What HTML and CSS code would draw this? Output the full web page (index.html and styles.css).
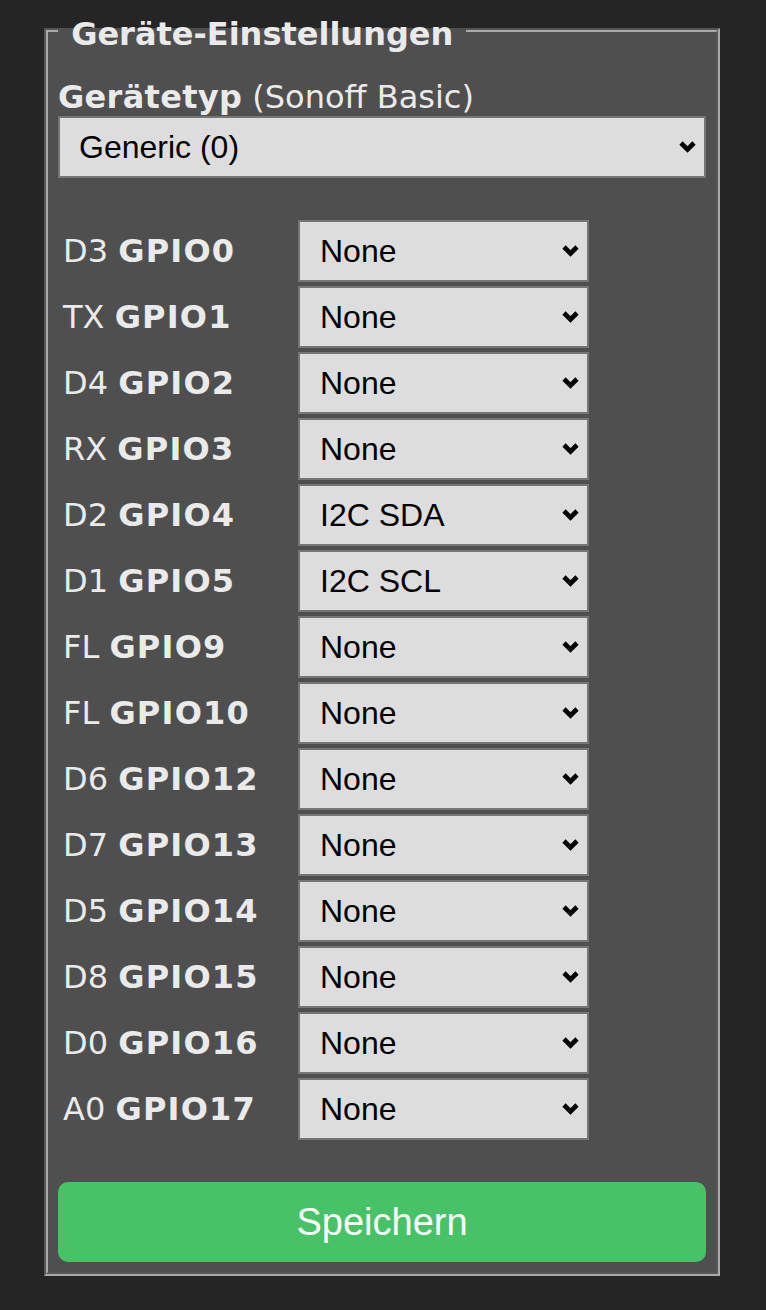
FILE: index.html
```html
<!DOCTYPE html>
<html lang="de">
<head>
<meta charset="utf-8">
<title>Geräte-Einstellungen</title>
<link rel="stylesheet" href="styles.css">
</head>
<body>
<fieldset class="panel">
  <legend class="panel-title">&nbsp;Geräte-Einstellungen&nbsp;</legend>
  <div class="type-label"><b>Gerätetyp</b> (Sonoff Basic)</div>
  <div class="sel sel-wide">
    <select><option>Generic (0)</option></select>
    <svg class="chev" viewBox="0 0 19 13" width="19" height="13"><path d="M3 3 L9.5 9.5 L16 3" fill="none" stroke="#000" stroke-width="4.6"/></svg>
  </div>
  <div class="gpio-grid">
    <div class="gpio-label">D3 <b>GPIO0</b></div>
    <div class="sel"><select><option>None</option></select><svg class="chev" viewBox="0 0 19 13" width="19" height="13"><path d="M3 3 L9.5 9.5 L16 3" fill="none" stroke="#000" stroke-width="4.6"/></svg></div>
    <div class="gpio-label">TX <b>GPIO1</b></div>
    <div class="sel"><select><option>None</option></select><svg class="chev" viewBox="0 0 19 13" width="19" height="13"><path d="M3 3 L9.5 9.5 L16 3" fill="none" stroke="#000" stroke-width="4.6"/></svg></div>
    <div class="gpio-label">D4 <b>GPIO2</b></div>
    <div class="sel"><select><option>None</option></select><svg class="chev" viewBox="0 0 19 13" width="19" height="13"><path d="M3 3 L9.5 9.5 L16 3" fill="none" stroke="#000" stroke-width="4.6"/></svg></div>
    <div class="gpio-label">RX <b>GPIO3</b></div>
    <div class="sel"><select><option>None</option></select><svg class="chev" viewBox="0 0 19 13" width="19" height="13"><path d="M3 3 L9.5 9.5 L16 3" fill="none" stroke="#000" stroke-width="4.6"/></svg></div>
    <div class="gpio-label">D2 <b>GPIO4</b></div>
    <div class="sel"><select><option>I2C SDA</option></select><svg class="chev" viewBox="0 0 19 13" width="19" height="13"><path d="M3 3 L9.5 9.5 L16 3" fill="none" stroke="#000" stroke-width="4.6"/></svg></div>
    <div class="gpio-label">D1 <b>GPIO5</b></div>
    <div class="sel"><select><option>I2C SCL</option></select><svg class="chev" viewBox="0 0 19 13" width="19" height="13"><path d="M3 3 L9.5 9.5 L16 3" fill="none" stroke="#000" stroke-width="4.6"/></svg></div>
    <div class="gpio-label">FL <b>GPIO9</b></div>
    <div class="sel"><select><option>None</option></select><svg class="chev" viewBox="0 0 19 13" width="19" height="13"><path d="M3 3 L9.5 9.5 L16 3" fill="none" stroke="#000" stroke-width="4.6"/></svg></div>
    <div class="gpio-label">FL <b>GPIO10</b></div>
    <div class="sel"><select><option>None</option></select><svg class="chev" viewBox="0 0 19 13" width="19" height="13"><path d="M3 3 L9.5 9.5 L16 3" fill="none" stroke="#000" stroke-width="4.6"/></svg></div>
    <div class="gpio-label">D6 <b>GPIO12</b></div>
    <div class="sel"><select><option>None</option></select><svg class="chev" viewBox="0 0 19 13" width="19" height="13"><path d="M3 3 L9.5 9.5 L16 3" fill="none" stroke="#000" stroke-width="4.6"/></svg></div>
    <div class="gpio-label">D7 <b>GPIO13</b></div>
    <div class="sel"><select><option>None</option></select><svg class="chev" viewBox="0 0 19 13" width="19" height="13"><path d="M3 3 L9.5 9.5 L16 3" fill="none" stroke="#000" stroke-width="4.6"/></svg></div>
    <div class="gpio-label">D5 <b>GPIO14</b></div>
    <div class="sel"><select><option>None</option></select><svg class="chev" viewBox="0 0 19 13" width="19" height="13"><path d="M3 3 L9.5 9.5 L16 3" fill="none" stroke="#000" stroke-width="4.6"/></svg></div>
    <div class="gpio-label">D8 <b>GPIO15</b></div>
    <div class="sel"><select><option>None</option></select><svg class="chev" viewBox="0 0 19 13" width="19" height="13"><path d="M3 3 L9.5 9.5 L16 3" fill="none" stroke="#000" stroke-width="4.6"/></svg></div>
    <div class="gpio-label">D0 <b>GPIO16</b></div>
    <div class="sel"><select><option>None</option></select><svg class="chev" viewBox="0 0 19 13" width="19" height="13"><path d="M3 3 L9.5 9.5 L16 3" fill="none" stroke="#000" stroke-width="4.6"/></svg></div>
    <div class="gpio-label">A0 <b>GPIO17</b></div>
    <div class="sel"><select><option>None</option></select><svg class="chev" viewBox="0 0 19 13" width="19" height="13"><path d="M3 3 L9.5 9.5 L16 3" fill="none" stroke="#000" stroke-width="4.6"/></svg></div>
  </div>
  <button class="save" type="button">Speichern</button>
</fieldset>
</body>
</html>
```
FILE: styles.css
```css
html, body {
  margin: 0;
  padding: 0;
  background: #252525;
}
body {
  padding-top: 7px;
  height: 1310px;
  box-sizing: border-box;
  font-family: "DejaVu Sans", Verdana, sans-serif;
  font-size: 32px;
  color: #eaeaea;
}
.panel {
  box-sizing: border-box;
  width: 676px;
  margin: 0 0 0 44px;
  padding: 10px;
  border: 4px groove #aaaaaa;
  background: #4f4f4f;
  min-inline-size: 0;
}
.panel-title {
  padding: 8px 2px 0 2px;
  font-weight: bold;
  font-size: 32px;
  color: #eaeaea;
}
.type-label {
  margin-top: 16px;
  line-height: 37px;
  font-size: 32px;
}
.type-label b {
  letter-spacing: 0.3px;
}
.sel {
  position: relative;
}
.sel select {
  -webkit-appearance: none;
  appearance: none;
  display: block;
  box-sizing: border-box;
  width: 100%;
  height: 62px;
  margin: 0;
  padding: 0 40px 0 19px;
  border: 2px solid #767676;
  border-radius: 0;
  background: #dddddd;
  color: #000;
  font-family: "Liberation Sans", Arial, sans-serif;
  font-size: 32px;
}
.sel .chev {
  position: absolute;
  right: 9px;
  top: 24px;
  pointer-events: none;
}
.gpio-grid {
  margin-top: 42px;
  display: grid;
  grid-template-columns: 240px 291px;
  row-gap: 4px;
  align-items: center;
}
.gpio-grid .sel select {
  padding-left: 20px;
}
.gpio-label {
  padding-left: 5px;
  white-space: nowrap;
  font-size: 32px;
}
.gpio-label b {
  letter-spacing: 1.2px;
}
.save {
  display: block;
  width: 100%;
  height: 80px;
  margin-top: 42px;
  border: 0;
  border-radius: 10px;
  background: #47c266;
  color: #ffffff;
  font-family: "Liberation Sans", Arial, Helvetica, sans-serif;
  font-size: 38px;
  padding: 0;
}
```
